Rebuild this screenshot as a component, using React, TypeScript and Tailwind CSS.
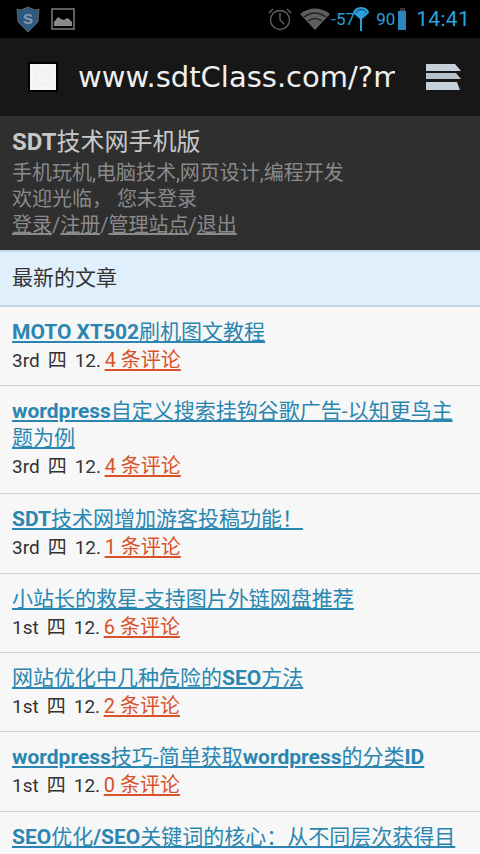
const cjk = "font-['Roboto','Noto_Sans_CJK_SC',sans-serif]";

const posts = [
  { title: "MOTO XT502刷机图文教程", day: "3rd", comments: "4 条评论", h: "h-[79px]", sep: "border-[#c9d6e0]" },
  { title: "wordpress自定义搜索挂钩谷歌广告-以知更鸟主题为例", day: "3rd", comments: "4 条评论", h: "h-[108px]", sep: "border-[#d5d5d5]" },
  { title: "SDT技术网增加游客投稿功能！", day: "3rd", comments: "1 条评论", h: "h-20", sep: "border-[#c9d6e0]" },
  { title: "小站长的救星-支持图片外链网盘推荐", day: "1st", comments: "6 条评论", h: "h-[79px]", sep: "border-[#d5d5d5]" },
  { title: "网站优化中几种危险的SEO方法", day: "1st", comments: "2 条评论", h: "h-[79px]", sep: "border-[#c9d6e0]" },
  { title: "wordpress技巧-简单获取wordpress的分类ID", day: "1st", comments: "0 条评论", h: "h-20", sep: "border-[#d5d5d5]" },
];

// only latin runs come out bold in the reference, the CJK fallback stays regular
function MixedTitle({ text }: { text: string }) {
  const parts = text.match(/[A-Za-z0-9 /]+|[^A-Za-z0-9 /]+/g) || [];
  return (
    <a className="text-[21px] leading-[27px] text-[#2a86b0] underline decoration-2 underline-offset-2">
      {parts.map((part, i) =>
        /^[A-Za-z0-9 /]/.test(part) ? (
          <b key={i} className="font-bold">{part}</b>
        ) : (
          <span key={i}>{part}</span>
        ),
      )}
    </a>
  );
}

function StatusBar() {
  return (
    <div className="flex h-[38px] items-center bg-black pl-4 pr-[10px]">
      {/* shield */}
      <svg width="24" height="27" viewBox="0 0 24 27">
        <path d="M1 3l4 1 7-3 7 3 4-1-1 13-10 10L2 16z" fill="#2c5a80" stroke="#5c5f63" />
        <text x="12" y="18" textAnchor="middle" fontSize="15" fontWeight="700" fill="#8d98a3" fontFamily="Liberation Sans">S</text>
      </svg>
      {/* picture */}
      <svg className="ml-[11px]" width="24" height="22" viewBox="0 0 24 22">
        <rect x="1" y="1" width="22" height="20" fill="none" stroke="#7c7c7c" strokeWidth="1.5" />
        <path d="M3 18v-4l4-5 3 2 3 1 3-2 2 1 3 3v4z" fill="#8a8a8a" />
      </svg>
      <div className="flex-1" />
      {/* alarm */}
      <svg width="24" height="24" viewBox="0 0 24 24" fill="none" stroke="#666" strokeWidth="1.3">
        <circle cx="12" cy="13" r="9.5" />
        <path d="M12 6v7l4 4M1 6l4-4M23 6l-4-4" />
      </svg>
      {/* wifi */}
      <svg className="ml-2" width="30" height="22" viewBox="0 0 30 22">
        <path d="M0 6Q15-5 30 6L15 22z" fill="#5f5f5f" />
        <path d="M4 9Q15 1 26 9M8 13Q15 8 22 13" fill="none" stroke="#222" strokeWidth="1.5" />
      </svg>
      <span className={`ml-[1px] w-[22px] text-[17px] leading-none whitespace-nowrap text-[#2a9fd8] ${cjk}`}>-57</span>
      <svg width="16" height="24" viewBox="0 0 16 24">
        <path d="M0 6a8 6 0 0 1 16 0l-8 7z" fill="#2a9fd8" />
        <path d="M3 6a5 3.5 0 0 1 10 0" fill="none" stroke="#123f58" />
        <path d="M8 10v14" stroke="#2a9fd8" strokeWidth="2" />
      </svg>
      <span className={`ml-[7px] w-[18px] text-[17px] leading-none text-[#2a9fd8] ${cjk}`}>90</span>
      <div className="ml-1 flex flex-col items-center">
        <div className="h-[3px] w-[5px] bg-[#3a3a3a]" />
        <div className="h-[19px] w-2 bg-[#2a86bd]" />
      </div>
      <span className={`ml-[10px] text-[21px] leading-none tracking-[0.3px] text-[#2aa5e0] ${cjk}`}>14:41</span>
    </div>
  );
}

function Header() {
  return (
    <div className="flex h-[78px] items-center bg-[#171717] pl-7 pr-[18px]">
      <div className="flex h-[30px] w-[30px] items-center justify-center border-2 border-black bg-[#f4f4f4]">
        <div className="h-4 w-4 rounded-full border border-dotted border-[#e2e2e2]" />
      </div>
      <div className="ml-5 w-[317px] overflow-hidden font-['DejaVu_Sans',sans-serif] text-[29px] leading-none whitespace-nowrap text-[#efefef]">
        www.sdtClass.com/?m
      </div>
      <svg className="ml-auto" width="36" height="28" viewBox="0 0 36 28">
        <path d="M0 1h29l6 7H0z" fill="#c6d0da" />
        <path d="M0 10h30l5 6H0z" fill="#b8c2cc" />
        <path d="M0 19h31l3 8H0z" fill="#c6d0da" />
      </svg>
    </div>
  );
}

function Post({ title, day, comments, h, sep }: (typeof posts)[number]) {
  return (
    <div className={`border-b px-3 pt-3 ${h} ${sep}`}>
      <MixedTitle text={title} />
      <div className="mt-px flex text-[19px] leading-[27px] text-[#333]">
        <span>{day}</span>
        <span className="ml-2">四</span>
        <span className="ml-2 w-[26px]">12.</span>
        <a className="ml-1 text-[20px] text-[#d9522c] underline decoration-2 underline-offset-2">{comments}</a>
      </div>
    </div>
  );
}

export default function App() {
  return (
    <div className={`h-[854px] w-[480px] overflow-hidden bg-[#f7f7f7] ${cjk}`}>
      <StatusBar />
      <Header />

      <div className="h-[134px] bg-[#2f2f2f] px-3 pt-[12px] text-[20px] leading-[26px] text-[#8a8a8a]">
        <h1 className="text-[24px] leading-[29px] text-[#c8c8c8]">
          <b className="font-bold">SDT</b>技术网手机版
        </h1>
        <p className="mt-[3px] whitespace-nowrap">手机玩机,电脑技术,网页设计,编程开发</p>
        <p>欢迎光临， 您未登录</p>
        <p>
          <a className="underline">登录</a>/<a className="underline">注册</a>/<a className="underline">管理站点</a>/<a className="underline">退出</a>
        </p>
      </div>

      <div className="flex h-[57px] items-center border-y-2 border-[#c5d8e8] bg-[#e0effc] px-3 text-[21px] text-[#333]">
        最新的文章
      </div>

      {posts.map((post) => (
        <Post key={post.title} {...post} />
      ))}

      <div className="px-3 pt-3 whitespace-nowrap">
        <MixedTitle text="SEO优化/SEO关键词的核心：从不同层次获得目" />
      </div>
    </div>
  );
}
